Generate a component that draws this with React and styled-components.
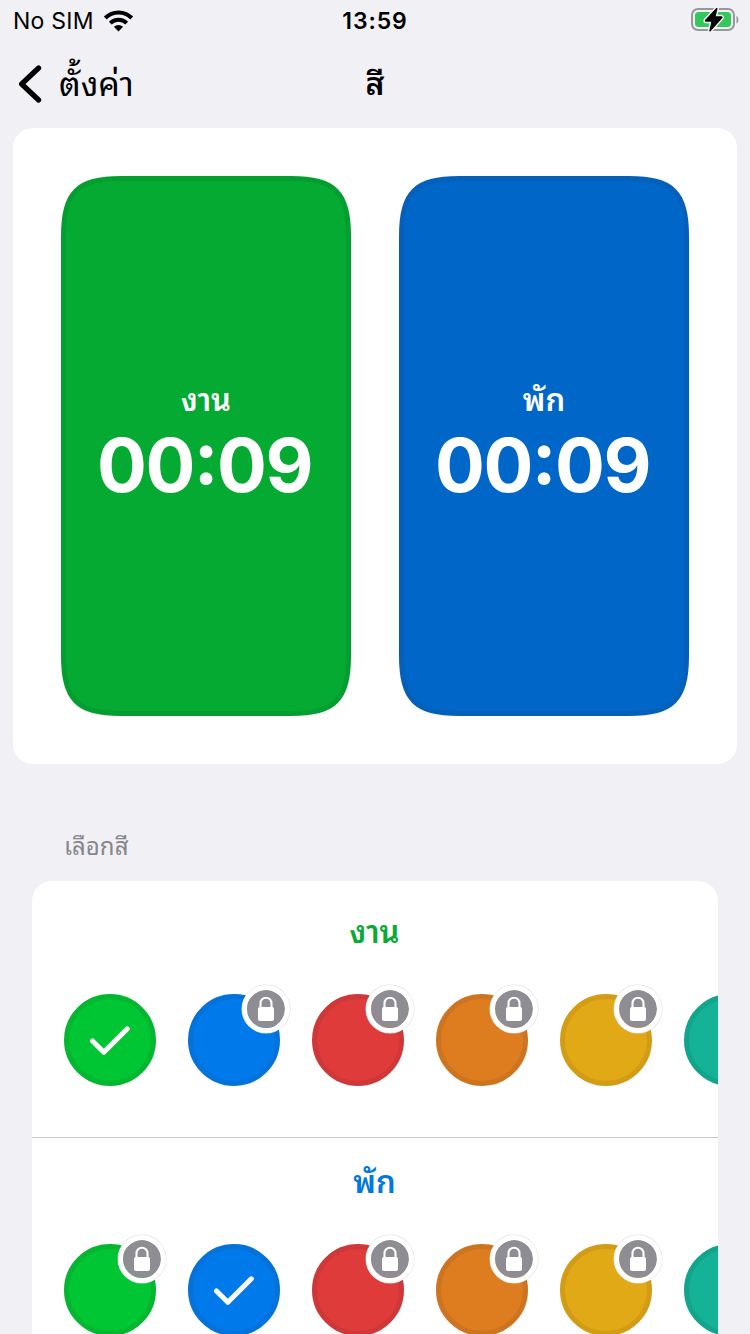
import React from "react";
import styled, { createGlobalStyle } from "styled-components";

const GlobalStyle = createGlobalStyle`
  *, *::before, *::after { box-sizing: border-box; }
  body { margin: 0; background: #f1f0f5; }
`;

/* Rounded rectangle with continuous (smoothed) corners of extent a */
const smoothRect = (w, h, a) => {
  const k = a * 0.25;
  return [
    `M${a} 0`,
    `L${w - a} 0`,
    `C${w - k} 0 ${w} ${k} ${w} ${a}`,
    `L${w} ${h - a}`,
    `C${w} ${h - k} ${w - k} ${h} ${w - a} ${h}`,
    `L${a} ${h}`,
    `C${k} ${h} 0 ${h - k} 0 ${h - a}`,
    `L0 ${a}`,
    `C0 ${k} ${k} 0 ${a} 0Z`,
  ].join(" ");
};

const Screen = styled.div`
  width: 750px;
  height: 1334px;
  overflow: hidden;
  display: flex;
  flex-direction: column;
  background: #f1f0f5;
  color: #000;
  font-family: Inter, "Noto Sans Thai Looped", "Noto Looped Thai", Loma, Waree, "Noto Sans", sans-serif;
`;

const StatusBar = styled.header`
  height: 40px;
  flex: none;
  display: grid;
  grid-template-columns: 1fr auto 1fr;
  align-items: center;
  padding: 0 10px 0 13px;
  font-size: 23px;
  line-height: 42px;

  svg {
    display: block;
    margin-bottom: 2px;
  }
`;

const Carrier = styled.div`
  display: flex;
  align-items: center;
  gap: 9px;
  letter-spacing: 0.25px;
`;

const Clock = styled.div`
  font-weight: 600;
  letter-spacing: 0.9px;
  margin-right: 3px;
`;

const BatterySlot = styled.div`
  display: flex;
  justify-content: flex-end;
`;

const NavBar = styled.nav`
  height: 88px;
  flex: none;
  display: grid;
  grid-template-columns: 1fr auto 1fr;
  align-items: center;
  padding: 0 18px;
  font-size: 34px;
  line-height: 88px;
`;

const BackButton = styled.div`
  display: flex;
  align-items: center;
  gap: 16px;
`;

const NavTitle = styled.div`
  font-size: 32px;
  font-weight: 600;
`;

const Preview = styled.section`
  flex: none;
  margin: 0 13px;
  height: 636px;
  padding: 48px;
  display: flex;
  gap: 48px;
  background: #fff;
  border-radius: 20px;
`;

const TimerEdge = styled.div`
  width: 290px;
  height: 540px;
  padding: 5px;
  background: ${(p) => p.$edge};
  clip-path: path("${smoothRect(290, 540, 60)}");
`;

const TimerFace = styled.div`
  width: 280px;
  height: 530px;
  padding-top: 195px;
  display: flex;
  flex-direction: column;
  align-items: center;
  background: ${(p) => p.$color};
  color: #fff;
  clip-path: path("${smoothRect(280, 530, 53)}");
`;

const TimerLabel = styled.div`
  font-size: 31px;
  font-weight: 600;
  line-height: 48px;
`;

const TimerValue = styled.div`
  margin-right: 3px;
  font-size: 74px;
  font-weight: 700;
  line-height: 82px;
  letter-spacing: -1.5px;
  font-feature-settings: "case" 1;
  white-space: nowrap;
`;

const SectionLabel = styled.h2`
  flex: none;
  margin: 64px 0 0 64px;
  height: 53px;
  font-size: 24px;
  font-weight: 400;
  line-height: 38px;
  color: #87868b;
`;

const ColorList = styled.section`
  flex: none;
  width: 686px;
  margin: 0 32px;
  overflow: hidden;
  background: #fff;
  border-radius: 20px 20px 0 0;
`;

const ColorRow = styled.div`
  height: 257px;
  padding: ${(p) => p.$top}px 0 0 32px;
  border-bottom: 1px solid #c7c6ca;
`;

const RowTitle = styled.h3`
  margin: 0 33px 0 0;
  height: 88px;
  text-align: center;
  font-size: 31px;
  font-weight: 600;
  line-height: 52px;
  color: ${(p) => p.$color};
`;

const Swatches = styled.div`
  display: flex;
  gap: 32px;
`;

const Swatch = styled.div`
  position: relative;
  flex: none;
  display: grid;
  place-items: center;
  width: 92px;
  height: 92px;
  border-radius: 50%;
  background: ${(p) => p.$color};
  border: 5px solid ${(p) => p.$edge};
`;

const LockBadge = styled.div`
  position: absolute;
  top: -14px;
  right: -15px;
  width: 48px;
  height: 48px;
  display: grid;
  place-items: center;
  border-radius: 50%;
  border: 5px solid #fff;
  background: #8e8d93;
  background-clip: padding-box;
  box-shadow: 0 0 0 0.5px #dcdce0;
`;

const WifiIcon = () => (
  <svg width="31" height="23" viewBox="0 0 31 23">
    <g fill="none" stroke="#000" strokeWidth="4">
      <path d="M2.3 9A18.5 18.5 0 0 1 28.7 9" />
      <path d="M7.3 14.1A11.6 11.6 0 0 1 23.7 14.1" />
    </g>
    <path d="M15.5 22.5L10.9 17.8A6.6 6.6 0 0 1 20.1 17.8Z" />
  </svg>
);

const BOLT = "M25.8 1.6L14.6 13.6Q14.4 14 15 14.1H21.2L19 23.8L30.8 10.6Q31 10.2 30.4 10H23.8Z";

const BatteryIcon = () => (
  <svg width="49" height="26" viewBox="0 0 49 26">
    <rect x="1" y="2" width="42" height="21" rx="6" fill="none" stroke="#98979c" strokeWidth="2" />
    <path d="M45.5 9v7.5c1.4-.7 1.9-2 1.9-3.8s-.5-3-1.9-3.7z" fill="#98979c" />
    <rect x="4" y="5" width="36" height="15" rx="3.5" fill="#34c759" />
    <path d={BOLT} fill="#000" stroke="#f1f0f5" strokeWidth="4.4" strokeLinejoin="round" />
    <path d={BOLT} stroke="#000" strokeWidth="1.4" strokeLinejoin="round" />
  </svg>
);

const BackIcon = () => (
  <svg width="25" height="40" viewBox="0 0 25 40">
    <path d="M20.6 4L3.6 20L20.6 36" fill="none" stroke="#000" strokeWidth="5.2" strokeLinecap="round" strokeLinejoin="round" />
  </svg>
);

const CheckIcon = () => (
  <svg width="42" height="32" viewBox="0 0 42 32">
    <path d="M3.5 17L14.8 28.3L38.3 4.8" fill="none" stroke="#fff" strokeWidth="5" strokeLinecap="round" strokeLinejoin="round" />
  </svg>
);

const LockIcon = () => (
  <svg width="18" height="26" viewBox="0 0 18 26">
    <path d="M3.5 12V7.2a5.5 5.5 0 0 1 11 0V12" fill="none" stroke="#fff" strokeWidth="2.1" />
    <rect x="1" y="11" width="16" height="14" rx="2" fill="#fff" />
  </svg>
);

const COLORS = [
  { id: "green", color: "#00c634", edge: "#05b730" },
  { id: "blue", color: "#007aeb", edge: "#0472d9" },
  { id: "red", color: "#df3b3b", edge: "#ce3838" },
  { id: "orange", color: "#de7d20", edge: "#cd7420" },
  { id: "yellow", color: "#e2a916", edge: "#d29c16" },
  { id: "teal", color: "#14b397", edge: "#13a58b" },
];

const TIMERS = [
  { label: "งาน", color: "#04aa32", edge: "#049d2f" },
  { label: "พัก", color: "#0067c8", edge: "#0460b9" },
];

const ROWS = [
  { title: "งาน", color: "#0aaa37", selected: "green", top: 25 },
  { title: "พัก", color: "#0078de", selected: "blue", top: 18 },
];

export default function App() {
  return (
    <Screen>
      <GlobalStyle />
      <StatusBar>
        <Carrier>
          No SIM
          <WifiIcon />
        </Carrier>
        <Clock>13:59</Clock>
        <BatterySlot>
          <BatteryIcon />
        </BatterySlot>
      </StatusBar>
      <NavBar>
        <BackButton>
          <BackIcon />
          ตั้งค่า
        </BackButton>
        <NavTitle>สี</NavTitle>
      </NavBar>
      <Preview>
        {TIMERS.map((t) => (
          <TimerEdge key={t.label} $edge={t.edge}>
            <TimerFace $color={t.color}>
              <TimerLabel>{t.label}</TimerLabel>
              <TimerValue>00:09</TimerValue>
            </TimerFace>
          </TimerEdge>
        ))}
      </Preview>
      <SectionLabel>เลือกสี</SectionLabel>
      <ColorList>
        {ROWS.map((row) => (
          <ColorRow key={row.title} $top={row.top}>
            <RowTitle $color={row.color}>{row.title}</RowTitle>
            <Swatches>
              {COLORS.map((c) => (
                <Swatch key={c.id} $color={c.color} $edge={c.edge}>
                  {c.id === row.selected ? (
                    <CheckIcon />
                  ) : (
                    <LockBadge>
                      <LockIcon />
                    </LockBadge>
                  )}
                </Swatch>
              ))}
            </Swatches>
          </ColorRow>
        ))}
      </ColorList>
    </Screen>
  );
}
